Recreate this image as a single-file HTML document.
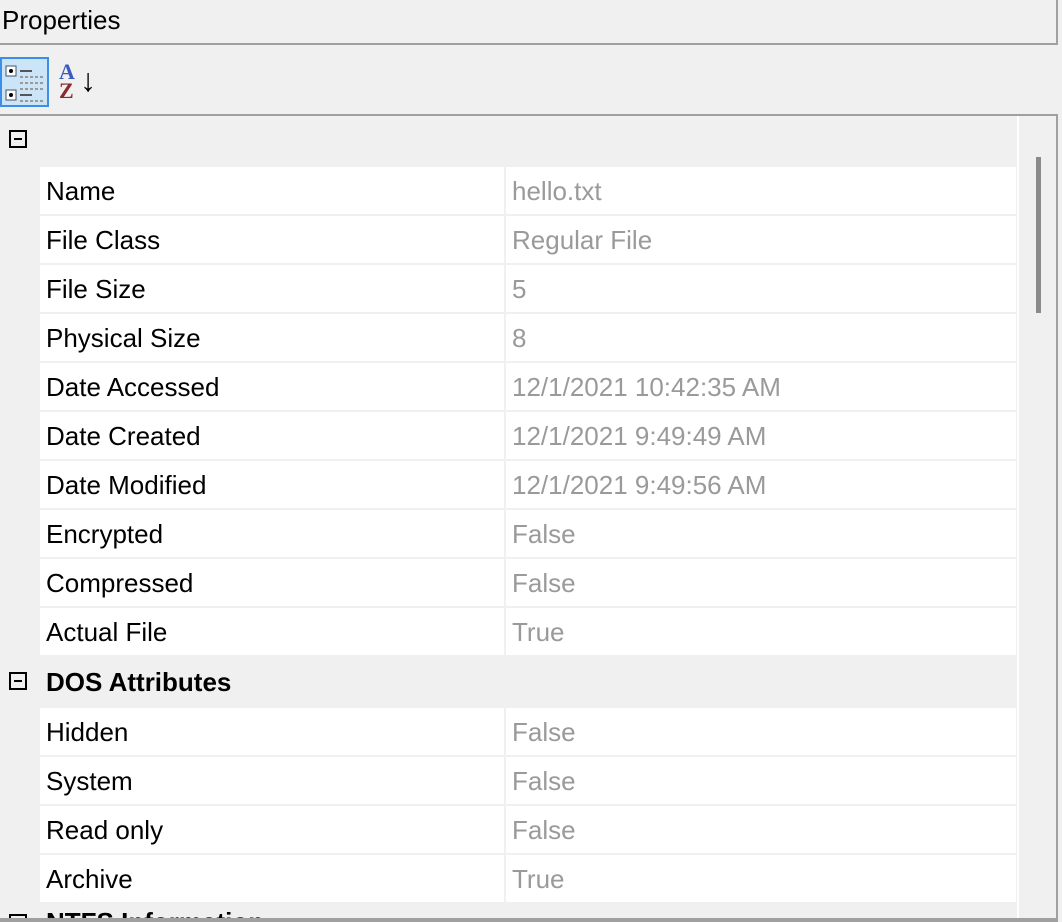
<!DOCTYPE html>
<html><head><meta charset="utf-8"><style>
html,body{margin:0;width:1062px;height:922px;overflow:hidden}
body{background:#f0f0f0;font-family:"Liberation Sans",sans-serif;position:relative}
.a{position:absolute}
.t{font-size:26px;color:#000}
.clip{position:absolute;left:0;top:0;width:1062px;height:918px;overflow:hidden}
.row{position:absolute;left:40px;width:976px;height:47px;background:#fff}
.row .n{position:absolute;left:6px;top:9px;font-size:26px;color:#000}
.row .v{position:absolute;left:472px;top:9px;font-size:26px;color:#9a9a9a}
.row .s{position:absolute;left:464px;top:0;width:2px;height:47px;background:#f0f0f0}
.box{position:absolute;width:18px;height:18px;border:2px solid #000;box-sizing:border-box;left:9px}
.box:after{content:"";position:absolute;left:3px;right:3px;top:6px;height:2px;background:#000}
</style></head><body>
<div class="clip">
<div class="a t" style="left:2px;top:5px">Properties</div>
<div class="a" style="left:0;top:43px;width:1058px;height:2px;background:#a0a0a0"></div>
<div class="a" style="left:1056px;top:0;width:2px;height:45px;background:#a0a0a0"></div>
<div class="a" style="left:0;top:57px;width:49px;height:50px;background:#cce4f7;border:2px solid #3d8ee6;box-sizing:border-box"></div>
<svg class="a" style="left:4px;top:64px" width="40" height="40"><rect x="2" y="2" width="10" height="10" fill="#fff" stroke="#456"/><rect x="2" y="26" width="10" height="10" fill="#fff" stroke="#456"/><circle cx="7" cy="7" r="2" fill="#000"/><circle cx="7" cy="31" r="2" fill="#000"/><g stroke="#555" stroke-width="2"><line x1="16" y1="7" x2="28" y2="7"/><line x1="16" y1="31" x2="28" y2="31"/></g><g stroke="#999" stroke-width="2" stroke-dasharray="3 2"><line x1="16" y1="13" x2="40" y2="13"/><line x1="16" y1="19" x2="40" y2="19"/><line x1="16" y1="25" x2="40" y2="25"/><line x1="16" y1="37" x2="40" y2="37"/></g></svg>
<div class="a" style="left:59px;top:62px;font-family:'Liberation Serif',serif;font-weight:bold;font-size:22px;line-height:19px;"><span style="color:#3a5bc0">A</span><br><span style="color:#8b2a2a">Z</span></div>
<div class="a" style="left:80px;top:62px;font-size:32px;line-height:36px">↓</div>
<div class="a" style="left:0;top:114px;width:1058px;height:2px;background:#a0a0a0"></div>
<div class="a" style="left:1056px;top:114px;width:2px;height:808px;background:#a0a0a0"></div>
<div class="box" style="top:130px"></div>
<div class="row" style="top:167px"><div class="n">Name</div><div class="s"></div><div class="v">hello.txt</div></div>
<div class="row" style="top:216px"><div class="n">File Class</div><div class="s"></div><div class="v">Regular File</div></div>
<div class="row" style="top:265px"><div class="n">File Size</div><div class="s"></div><div class="v">5</div></div>
<div class="row" style="top:314px"><div class="n">Physical Size</div><div class="s"></div><div class="v">8</div></div>
<div class="row" style="top:363px"><div class="n">Date Accessed</div><div class="s"></div><div class="v">12/1/2021 10:42:35 AM</div></div>
<div class="row" style="top:412px"><div class="n">Date Created</div><div class="s"></div><div class="v">12/1/2021 9:49:49 AM</div></div>
<div class="row" style="top:461px"><div class="n">Date Modified</div><div class="s"></div><div class="v">12/1/2021 9:49:56 AM</div></div>
<div class="row" style="top:510px"><div class="n">Encrypted</div><div class="s"></div><div class="v">False</div></div>
<div class="row" style="top:559px"><div class="n">Compressed</div><div class="s"></div><div class="v">False</div></div>
<div class="row" style="top:608px"><div class="n">Actual File</div><div class="s"></div><div class="v">True</div></div>
<div class="box" style="top:672px"></div>
<div class="a t" style="left:46px;top:667px;font-weight:bold">DOS Attributes</div>
<div class="row" style="top:708px"><div class="n">Hidden</div><div class="s"></div><div class="v">False</div></div>
<div class="row" style="top:757px"><div class="n">System</div><div class="s"></div><div class="v">False</div></div>
<div class="row" style="top:806px"><div class="n">Read only</div><div class="s"></div><div class="v">False</div></div>
<div class="row" style="top:855px"><div class="n">Archive</div><div class="s"></div><div class="v">True</div></div>
<div class="a t" style="left:46px;top:907px;font-weight:bold">NTFS Information</div>
<div class="box" style="top:914px"></div>
<div class="a" style="left:1017px;top:116px;width:2px;height:802px;background:#fff"></div>
<div class="a" style="left:1036px;top:157px;width:5px;height:156px;background:#8a8a8a"></div>
</div>
<div class="a" style="left:0;top:918px;width:1058px;height:4px;background:#a0a0a0"></div>
<div class="a" style="left:1056px;top:114px;width:2px;height:808px;background:#a0a0a0"></div>
</body></html>
